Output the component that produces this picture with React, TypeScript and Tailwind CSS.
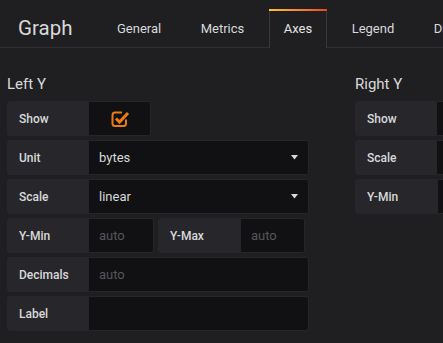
import React from "react";

const Caret = () => (
  <svg width="7" height="5" viewBox="0 0 7 5" className="shrink-0">
    <path d="M0 0 H7 L3.5 4.5 Z" fill="#d8d9da" />
  </svg>
);

const Check = () => (
  <svg width="19" height="19" viewBox="0 0 19 19" className="mt-[-1px] ml-[1px]">
    <path
      d="M15 10.5 V14.5 Q15 17 12.5 17 H4 Q1.5 17 1.5 14.5 V6 Q1.5 3.5 4 3.5 H11"
      fill="none"
      stroke="#eb7b18"
      strokeWidth="2"
    />
    <path d="M5 9.5 L8.5 13 L17 4" fill="none" stroke="#eb7b18" strokeWidth="3" />
  </svg>
);

const Label = ({ text, w = "w-[81px]" }: { text: string; w?: string }) => (
  <div
    className={`${w} shrink-0 h-full flex items-center pl-[11px] bg-[#27272b] border border-[#27272b] rounded-l-[3px] text-[12px] font-medium text-[#d8d9da]`}
  >
    {text}
  </div>
);

const Input = ({
  w,
  children,
  className = "",
}: {
  w: string;
  children?: React.ReactNode;
  className?: string;
}) => (
  <div
    className={`${w} shrink-0 h-full flex items-center bg-[#111113] border border-[#26262a] rounded-r-[3px] text-[13px] text-[#d8d9da] ${className}`}
  >
    {children}
  </div>
);

const Row = ({ children }: { children: React.ReactNode }) => (
  <div className="flex h-[35px]">{children}</div>
);

const CheckRow = ({ label }: { label: string }) => (
  <Row>
    <Label text={label} />
    <Input w="w-[63px]" className="justify-center">
      <Check />
    </Input>
  </Row>
);

const SelectRow = ({ label, value }: { label: string; value: string }) => (
  <Row>
    <Label text={label} />
    <Input w="w-[221px]" className="pl-[10px] pr-[10px] justify-between">
      <span>{value}</span>
      <Caret />
    </Input>
  </Row>
);

const TextRow = ({ label, placeholder }: { label: string; placeholder?: string }) => (
  <Row>
    <Label text={label} />
    <Input w="w-[221px]" className="pl-[10px]">
      <span className="text-[#55565a]">{placeholder}</span>
    </Input>
  </Row>
);

export default function App() {
  const tabs = ["General", "Metrics", "Axes", "Legend", "Display", "Alert"];
  return (
    <div
      className="w-[443px] h-[343px] overflow-hidden bg-[#1f1f22]"
      style={{ fontFamily: "Roboto, 'Noto Sans', sans-serif" }}
    >
      <div className="h-[48px] flex items-end border-b border-[#303034] pl-[18px] whitespace-nowrap">
        <div className="text-[20.5px] leading-[24px] text-[#d8d9da] pb-[7px]">Graph</div>
        <div className="flex items-end gap-[9.5px] ml-[29.5px]">
          {tabs.map((t) =>
            t === "Axes" ? (
              <div
                key={t}
                className="relative -mb-px h-[39px] flex items-center px-[14px] border-x border-[#38383c] bg-[#1f1f22] text-[13px] leading-[16px] text-[#e3e4e6]"
              >
                <div className="absolute left-[-1px] right-[-1px] top-0 h-[2px] bg-gradient-to-r from-[#f9c23c] to-[#ee4023]" />
                <span className="pt-[1px]">{t}</span>
              </div>
            ) : (
              <div
                key={t}
                className="h-[38px] flex items-center px-[14px] border-x border-transparent text-[13px] leading-[16px] text-[#d8d9da]"
              >
                <span className="pt-[1px]">{t}</span>
              </div>
            )
          )}
        </div>
      </div>

      <div className="flex gap-[46px] pl-[7px] pt-[26px]">
        <div className="w-[302px] shrink-0">
          <div className="text-[15px] leading-[20px] text-[#d8d9da] mb-[7px]">Left Y</div>
          <div className="flex flex-col gap-[4px]">
            <CheckRow label="Show" />
            <SelectRow label="Unit" value="bytes" />
            <SelectRow label="Scale" value="linear" />
            <div className="flex gap-[4px] h-[35px]">
              <div className="flex h-full">
                <Label text="Y-Min" />
                <Input w="w-[66px]" className="pl-[10px]">
                  <span className="text-[#55565a]">auto</span>
                </Input>
              </div>
              <div className="flex h-full">
                <Label text="Y-Max" w="w-[82px]" />
                <Input w="w-[65px]" className="pl-[10px]">
                  <span className="text-[#55565a]">auto</span>
                </Input>
              </div>
            </div>
            <TextRow label="Decimals" placeholder="auto" />
            <TextRow label="Label" />
          </div>
        </div>
        <div className="w-[302px] shrink-0">
          <div className="text-[15px] leading-[20px] text-[#d8d9da] mb-[7px]">Right Y</div>
          <div className="flex flex-col gap-[4px]">
            <CheckRow label="Show" />
            <SelectRow label="Scale" value="linear" />
            <div className="flex h-[35px]">
              <Label text="Y-Min" w="w-[82px]" />
              <Input w="w-[66px]" className="pl-[10px]">
                <span className="text-[#55565a]">auto</span>
              </Input>
            </div>
          </div>
        </div>
      </div>
    </div>
  );
}
